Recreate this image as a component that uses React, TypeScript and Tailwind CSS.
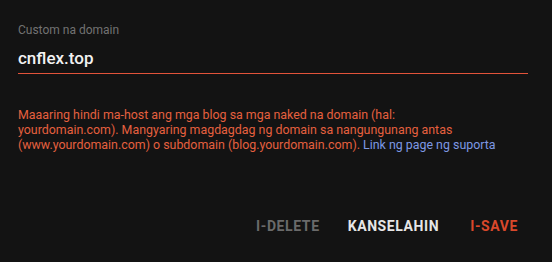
export default function App() {
  return (
    <div
      className="w-[552px] h-[262px] bg-[#131313] px-[18px] pt-[22px] box-border"
      style={{ fontFamily: 'Roboto, "Noto Sans", Arial, sans-serif' }}
    >
      <div className="text-[12px] leading-[16px] text-[#727272]">Custom na domain</div>
      <div className="mt-[8px] w-[510px] border-b border-[#e2533a] pb-[3px]">
        <div className="text-[17px] leading-[24px] font-medium text-[#f2f2f2]">cnflex.top</div>
      </div>
      <p className="mt-[33px] text-[12.4px] leading-[15px] text-[#e5603f] whitespace-nowrap">
        Maaaring hindi ma-host ang mga blog sa mga naked na domain (hal:
        <br />
        yourdomain.com). Mangyaring magdagdag ng domain sa nangungunang antas
        <br />
        (www.yourdomain.com) o subdomain (blog.yourdomain.com).{' '}
        <a className="text-[#7d98e3]">Link ng page ng suporta</a>
      </p>
      <div className="mt-[64px] flex justify-end items-center pr-[16px] text-[14px] leading-[20px] font-bold tracking-[0.6px] uppercase">
        <span className="text-[#6a6a6a]">I-DELETE</span>
        <span className="ml-[28px] text-[#e6e6e6]">KANSELAHIN</span>
        <span className="ml-[31px] text-[#d9482b]">I-SAVE</span>
      </div>
    </div>
  );
}
